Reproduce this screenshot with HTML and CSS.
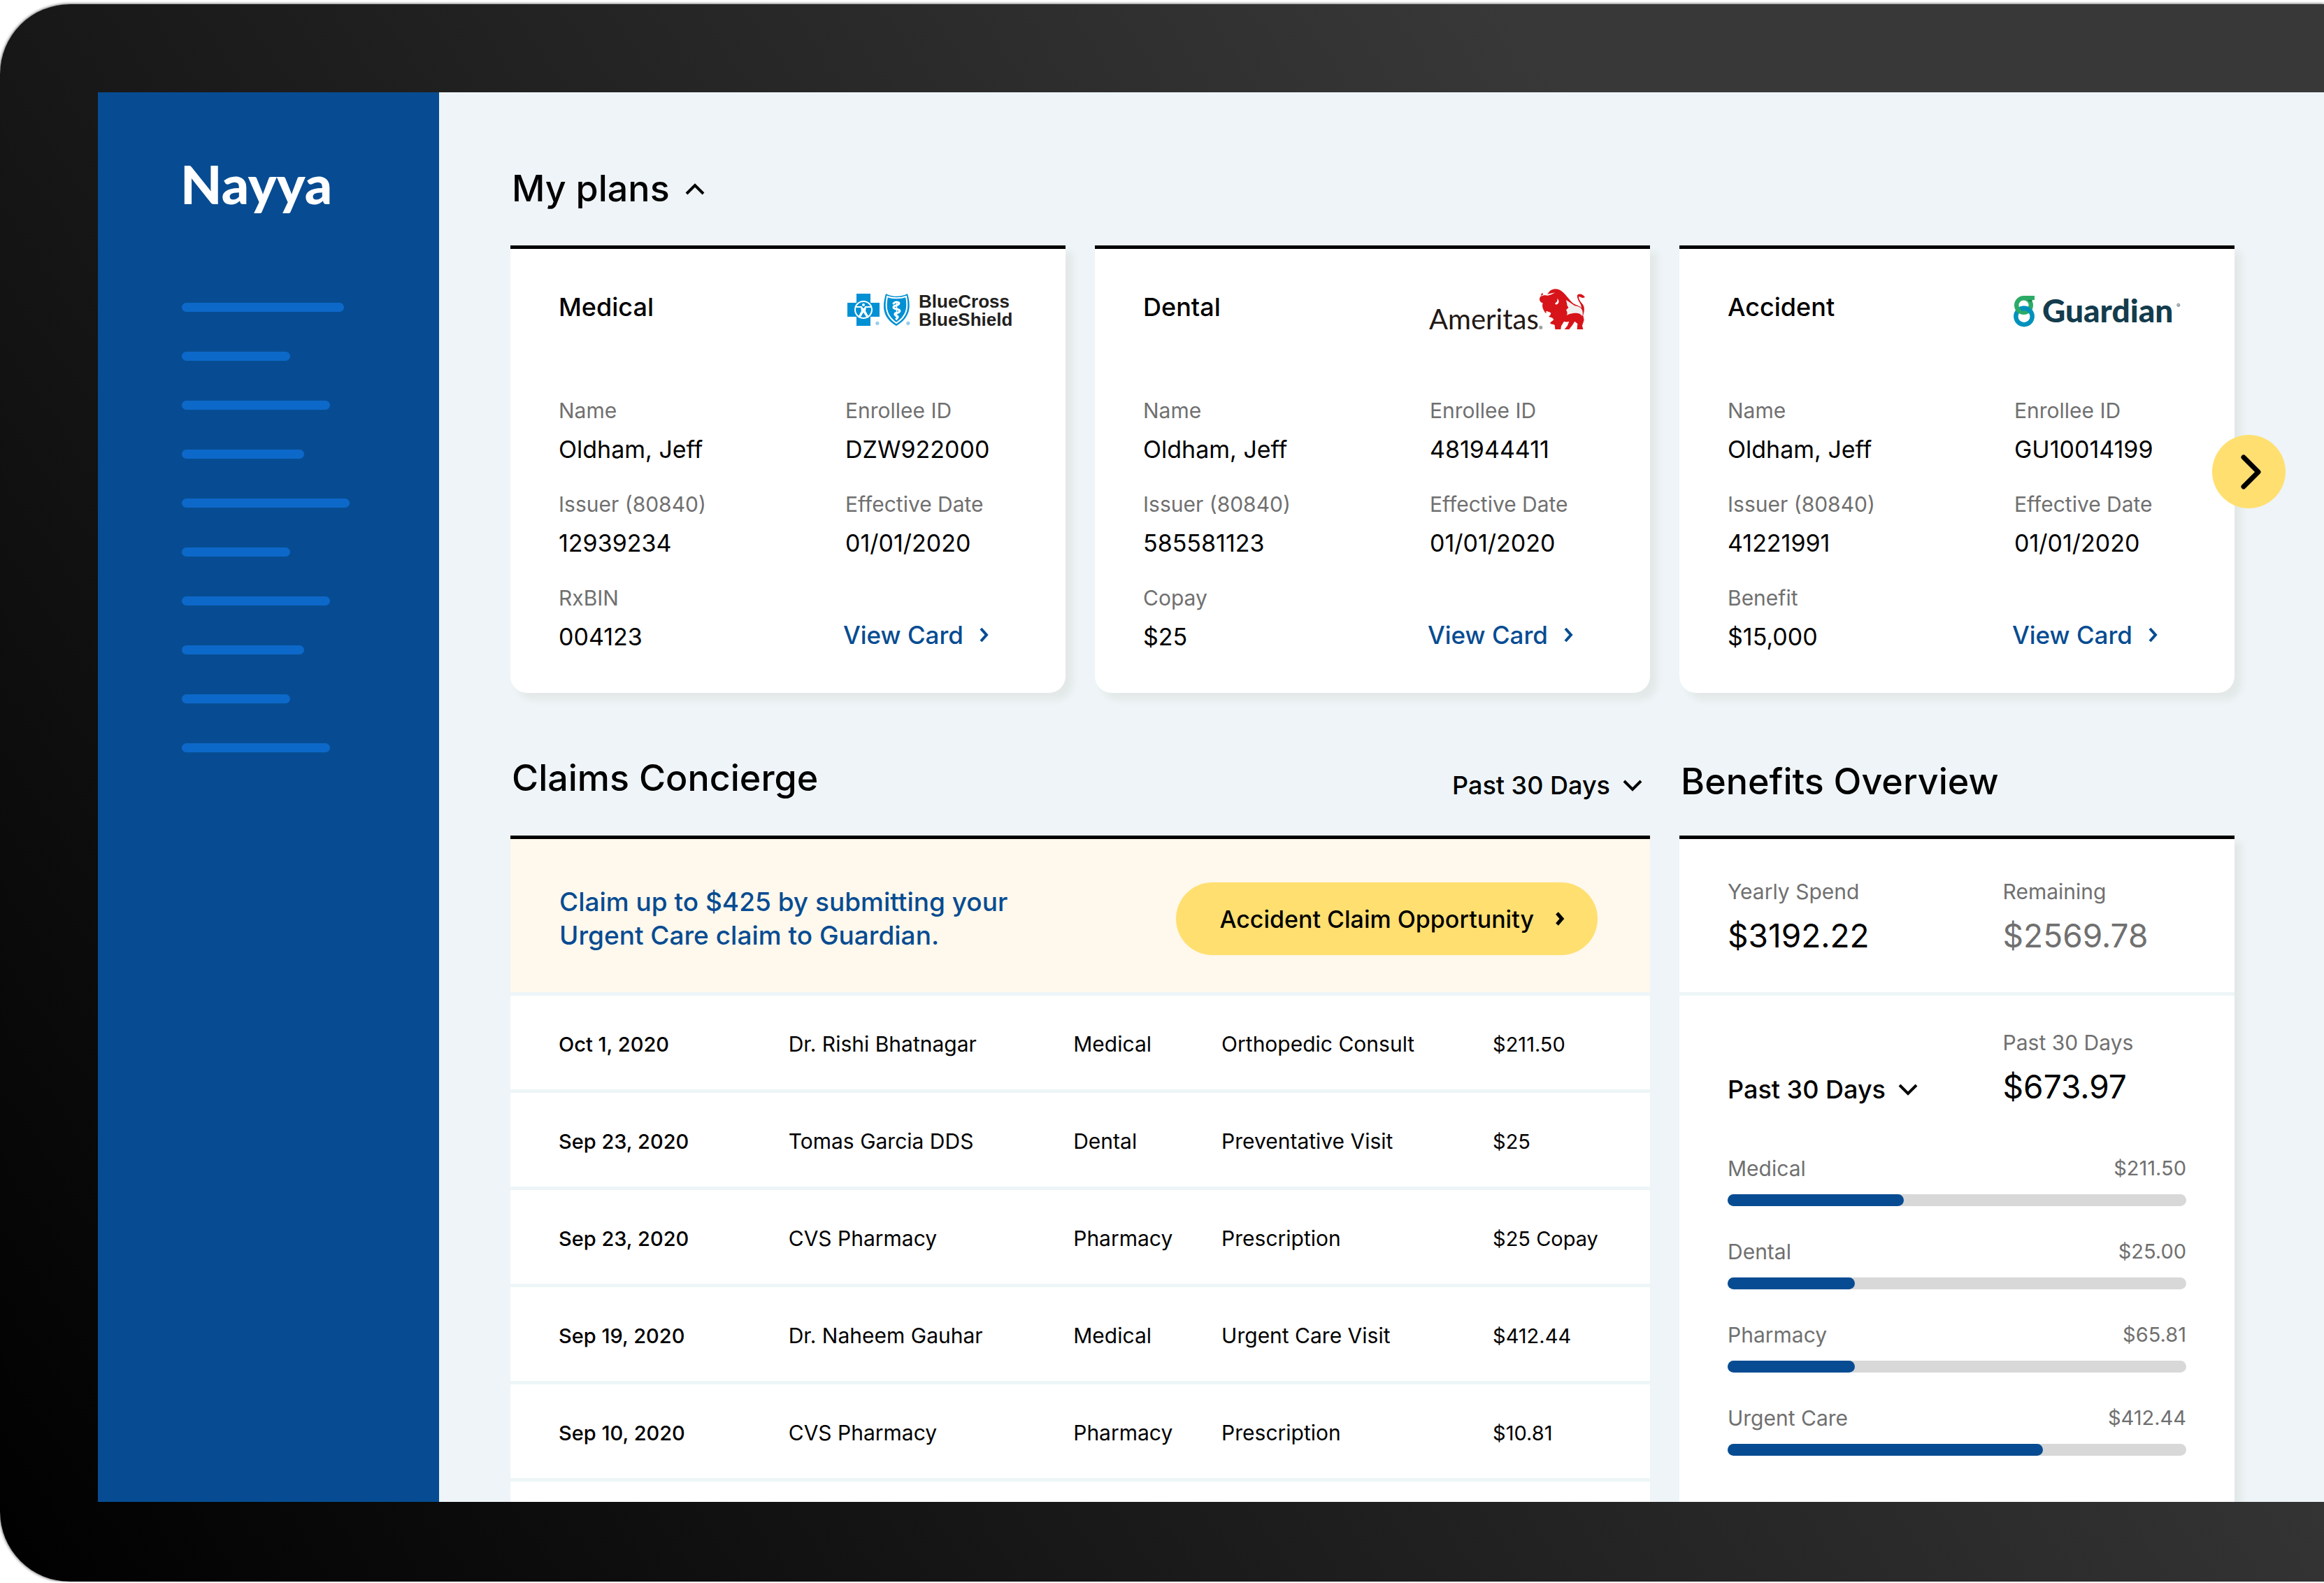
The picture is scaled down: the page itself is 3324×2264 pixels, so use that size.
FILE: index.html
```html
<!DOCTYPE html>
<html lang="en">
<head>
<meta charset="utf-8">
<meta name="viewport" content="width=device-width, initial-scale=1">
<title>Nayya</title>
<link rel="stylesheet" href="styles.css">
</head>
<body>
<div class="device">
  <div class="screen">
    <aside class="sidebar">
      <a class="brand" href="#">Nayya</a>
      <ul class="nav" aria-hidden="true">
        <li style="width:232px"></li>
        <li style="width:155px"></li>
        <li style="width:212px"></li>
        <li style="width:175px"></li>
        <li style="width:240px"></li>
        <li style="width:155px"></li>
        <li style="width:212px"></li>
        <li style="width:175px"></li>
        <li style="width:155px"></li>
        <li style="width:212px"></li>
      </ul>
    </aside>

    <main class="main">
      <section class="plans">
        <h2 class="heading">
          <button class="toggle" type="button" aria-expanded="true">My plans
            <svg class="chevron" width="28" height="17" viewBox="0 0 28 17" aria-hidden="true"><path d="M2 15 14 3 26 15"/></svg>
          </button>
        </h2>
        <div class="plan-list">
          <article class="card">
            <header class="card-head">
              <h3 class="card-title">Medical</h3>
              <svg class="logo" width="248" height="72" viewBox="0 0 248 72" role="img" aria-label="BlueCross BlueShield">
                <path fill="#0090d4" d="M16 15h20v13h13v20H36v13H16V48H3V28h13z"/>
                <circle cx="26" cy="38" r="12" fill="#0090d4" stroke="#fff" stroke-width="2"/>
                <path fill="none" stroke="#fff" stroke-width="2" d="M15 34h8l3 4 3-4h8M26 38v3M23 34l1 6-5 9M29 34l-1 6 5 9M21 48l5-8 5 8"/>
                <circle cx="26" cy="31" r="2" fill="#fff"/>
                <path fill="#0090d4" d="M58 15c9 5 22 5 31 0 5 17 5 34-16 46C52 49 53 32 58 15z"/>
                <path fill="none" stroke="#fff" stroke-width="2" d="M60 19c8 3 19 3 27 0 3 15 2 28-14 38C58 47 57 34 60 19z"/>
                <path fill="none" stroke="#fff" stroke-width="3" stroke-linecap="round" d="M69 29c3-3 8-2 8 0-1 4-9 2-8 6 1 3 9 1 9 5-1 4-8 1-7 5 1 3 5 1 4 4l-2 2"/>
                <path stroke="#fff" stroke-width="1.5" d="M73.500 26v27"/>
                <text class="reg" x="43" y="61" fill="#0090d4">®</text>
                <text class="reg" x="87" y="61" fill="#0090d4">®</text>
                <text class="bcbs" x="105" y="35">BlueCross</text>
                <text class="bcbs" x="105" y="61">BlueShield</text>
              </svg>
            </header>
            <dl class="facts">
              <div><dt>Name</dt><dd>Oldham, Jeff</dd></div>
              <div><dt>Enrollee ID</dt><dd>DZW922000</dd></div>
              <div><dt>Issuer (80840)</dt><dd>12939234</dd></div>
              <div><dt>Effective Date</dt><dd>01/01/2020</dd></div>
              <div><dt>RxBIN</dt><dd>004123</dd></div>
            </dl>
            <a class="view" href="#">View Card
              <svg width="14" height="22" viewBox="0 0 14 22" aria-hidden="true"><path d="M2 2 10 11 2 20"/></svg>
            </a>
          </article>

          <article class="card">
            <header class="card-head">
              <h3 class="card-title">Dental</h3>
              <svg class="logo" width="248" height="72" viewBox="0 0 248 72" role="img" aria-label="Ameritas">
                <text class="ameritas" x="-1" y="66">Ameritas</text>
                <text class="reg" x="156" y="67" fill="#231815">®</text>
                <g transform="translate(145 0) scale(.3333)">
                  <path fill="#f1f0ef" d="M148 74 186 92l28 8 8 24-2 24-30-8-45 6-8-26 14-20z"/>
                  <path fill="#d7141a" d="M51 50C42 51 33 64 37 74c2 7 8 10 13 11-4 12-1 24 6 34 3 10 9 10 12 6 6-2 12-1 17 3-1 8-6 12-10 16l10 3c6 0 8 5 12 9-6 8-14 9-16 16 5 6 13 3 20 8l2 18h24l2-14 12-20c8 4 16 2 22 0l-8 20-12 14h20l14-18 10-16 12 10-2 24h26l-4-16 8-24-4-20c6-16 8-38-4-50-10-12-16-22-14-30 4-2 14 10 26 2-8-12-20-16-30-12-10 8 4 30 12 44l3 14c-10-10-24-12-36-20-18-14-32-40-50-52-14-12-38-14-52 2-5 5-6 10-10 12 12-4 24-4 34-8-10 8-22 12-34 13-9-3-18-1-25 3-2-6 1-13 6-15zM150 72l36 24c12 4 26 4 32 18 4 8 4 18 2 28-10-16-28-15-40-13-10 1-20 4-28 10 6-8 2-18-2-24l10-10c-2-6-8-10-6-15z"/>
                  <path fill="#fff" d="M112 66c8 6 10 18 0 24-6 4-12 0-8-5 6-4 10-8 8-19zM62 122c6-3 12 0 16 3-4 0-6 5-9 4z"/>
                </g>
              </svg>
            </header>
            <dl class="facts">
              <div><dt>Name</dt><dd>Oldham, Jeff</dd></div>
              <div><dt>Enrollee ID</dt><dd>481944411</dd></div>
              <div><dt>Issuer (80840)</dt><dd>585581123</dd></div>
              <div><dt>Effective Date</dt><dd>01/01/2020</dd></div>
              <div><dt>Copay</dt><dd>$25</dd></div>
            </dl>
            <a class="view" href="#">View Card
              <svg width="14" height="22" viewBox="0 0 14 22" aria-hidden="true"><path d="M2 2 10 11 2 20"/></svg>
            </a>
          </article>

          <article class="card">
            <header class="card-head">
              <h3 class="card-title">Accident</h3>
              <svg class="logo" width="248" height="72" viewBox="0 0 248 72" role="img" aria-label="Guardian">
                <circle cx="14" cy="47.500" r="11.700" fill="none" stroke="#0092bc" stroke-width="6.400"/>
                <circle cx="13.500" cy="31.500" r="10.300" fill="none" stroke="#2cab66" stroke-width="6.400"/>
                <path fill="#2cab66" d="M13 18h16v6H13z"/>
                <path fill="#1d7f4f" d="M18 24h8l-2 3z"/>
                <path fill="none" stroke="#0092bc" stroke-width="6.400" d="M9 37a11.700 11.700 0 0 1 15 5"/>
                <text class="guardian" x="40" y="56">Guardian</text>
                <text class="reg" x="232" y="35" fill="#133c4d">®</text>
              </svg>
            </header>
            <dl class="facts">
              <div><dt>Name</dt><dd>Oldham, Jeff</dd></div>
              <div><dt>Enrollee ID</dt><dd>GU10014199</dd></div>
              <div><dt>Issuer (80840)</dt><dd>41221991</dd></div>
              <div><dt>Effective Date</dt><dd>01/01/2020</dd></div>
              <div><dt>Benefit</dt><dd>$15,000</dd></div>
            </dl>
            <a class="view" href="#">View Card
              <svg width="14" height="22" viewBox="0 0 14 22" aria-hidden="true"><path d="M2 2 10 11 2 20"/></svg>
            </a>
          </article>

          <button class="next" type="button" aria-label="Next plans">
            <svg width="36" height="56" viewBox="0 0 36 56" aria-hidden="true"><path d="M10 7 31 28 10 49"/></svg>
          </button>
        </div>
      </section>

      <div class="lower">
        <section class="claims">
          <header class="section-head">
            <h2 class="heading">Claims Concierge</h2>
            <span class="select">
              <select aria-label="Claims period"><option>Past 30 Days</option></select>
              <svg class="chevron" width="28" height="17" viewBox="0 0 28 17" aria-hidden="true"><path d="M2 2 14 14 26 2"/></svg>
            </span>
          </header>
          <div class="panel">
            <div class="banner">
              <p class="banner-text">Claim up to $425 by submitting your<br>Urgent Care claim to Guardian.</p>
              <button class="cta" type="button">Accident Claim Opportunity
                <svg width="14" height="20" viewBox="0 0 14 20" aria-hidden="true"><path d="M3 2 10 10 3 18"/></svg>
              </button>
            </div>
            <table class="claims-table">
              <colgroup><col class="c-date"><col class="c-provider"><col class="c-plan"><col class="c-service"><col></colgroup>
              <tbody>
                <tr><th scope="row">Oct 1, 2020</th><td>Dr. Rishi Bhatnagar</td><td>Medical</td><td>Orthopedic Consult</td><td class="amount">$211.50</td></tr>
                <tr><th scope="row">Sep 23, 2020</th><td>Tomas Garcia DDS</td><td>Dental</td><td>Preventative Visit</td><td class="amount">$25</td></tr>
                <tr><th scope="row">Sep 23, 2020</th><td>CVS Pharmacy</td><td>Pharmacy</td><td>Prescription</td><td class="amount">$25 Copay</td></tr>
                <tr><th scope="row">Sep 19, 2020</th><td>Dr. Naheem Gauhar</td><td>Medical</td><td>Urgent Care Visit</td><td class="amount">$412.44</td></tr>
                <tr><th scope="row">Sep 10, 2020</th><td>CVS Pharmacy</td><td>Pharmacy</td><td>Prescription</td><td class="amount">$10.81</td></tr>
              </tbody>
            </table>
          </div>
        </section>

        <section class="benefits">
          <header class="section-head">
            <h2 class="heading">Benefits Overview</h2>
          </header>
          <div class="panel">
            <div class="totals">
              <dl class="figure"><dt>Yearly Spend</dt><dd>$3192.22</dd></dl>
              <dl class="figure muted"><dt>Remaining</dt><dd>$2569.78</dd></dl>
            </div>
            <div class="period">
              <span class="select">
                <select aria-label="Benefits period"><option>Past 30 Days</option></select>
                <svg class="chevron" width="28" height="17" viewBox="0 0 28 17" aria-hidden="true"><path d="M2 2 14 14 26 2"/></svg>
              </span>
              <dl class="figure"><dt>Past 30 Days</dt><dd>$673.97</dd></dl>
            </div>
            <ul class="spend">
              <li><span>Medical</span><span class="amount">$211.50</span><div class="bar"><div style="width:38.4%"></div></div></li>
              <li><span>Dental</span><span class="amount">$25.00</span><div class="bar"><div style="width:27.7%"></div></div></li>
              <li><span>Pharmacy</span><span class="amount">$65.81</span><div class="bar"><div style="width:27.7%"></div></div></li>
              <li><span>Urgent Care</span><span class="amount">$412.44</span><div class="bar"><div style="width:68.8%"></div></div></li>
            </ul>
          </div>
        </section>
      </div>
    </main>
  </div>
</div>
</body>
</html>
```
FILE: styles.css
```css
* {
  box-sizing: border-box;
}

:root {
  --blue: #074c92;
  --yellow: #ffdf70;
  --page: #eef4f7;
  --rule: #edf5f7;
  --grey: #707070;
}

body,
h2,
h3,
p,
ul,
dl,
dd {
  margin: 0;
  padding: 0;
}

body {
  background: #fff;
  color: #000;
  font-family: Inter, "Liberation Sans", sans-serif;
  font-size: 30px;
}

ul {
  list-style: none;
}

a {
  text-decoration: none;
}

button,
select {
  border: 0;
  padding: 0;
  background: none;
  color: inherit;
  font: inherit;
  cursor: pointer;
}

/* Tablet frame */
.device {
  display: flex;
  height: calc(100vh - 8px);
  margin-top: 6px;
  padding: 126px 0 114px 140px;
  border-radius: 100px 0 0 100px;
  background: linear-gradient(56deg, #000, #383838 76%);
  box-shadow: 0 0 4px #333;
}

.screen {
  display: flex;
  flex: 1;
  min-width: 0;
  overflow: hidden;
  background: var(--page);
}

/* Sidebar */
.sidebar {
  flex: none;
  width: 488px;
  padding: 85px 118px;
  background: var(--blue);
}

.brand {
  display: block;
  height: 90px;
  margin-bottom: 126px;
  color: #fff;
  font: 900 77px/90px Lato, sans-serif;
}

.nav {
  display: grid;
  gap: 57px;
  padding-left: 2px;
}

.nav li {
  height: 13px;
  border-radius: 7px;
  background: #0d69c9;
}

/* Main column */
.main {
  display: flex;
  flex: 1;
  flex-direction: column;
  min-width: 0;
  padding: 106px 128px 0 102px;
}

.heading {
  padding-left: 2px;
  font-size: 52px;
  font-weight: 500;
  line-height: 64px;
}

.toggle {
  display: flex;
  align-items: center;
  gap: 22px;
}

.chevron,
.view svg,
.cta svg,
.next svg {
  fill: none;
  stroke: currentColor;
  stroke-width: 4px;
}

/* Plan cards */
.plan-list {
  position: relative;
  display: grid;
  grid-template-columns: repeat(3, minmax(0, 1fr));
  gap: 42px;
  margin-top: 49px;
}

.card {
  position: relative;
  padding: 49px 69px;
  border-top: 5px solid #000;
  border-radius: 0 0 24px 24px;
  background: #fff;
  box-shadow: 10px 10px 8px #e3e9e8;
}

.card-head,
.facts {
  display: grid;
  grid-template-columns: minmax(0, 5fr) minmax(0, 3fr);
}

.card-head {
  height: 157px;
  align-items: start;
}

.card-title {
  margin-top: 9px;
  font-size: 36px;
  font-weight: 500;
  line-height: 50px;
}

.logo {
  overflow: visible;
}

.reg {
  font-size: 8px;
}

.bcbs {
  fill: #231f20;
  font: 700 26px "Liberation Sans", sans-serif;
}

.ameritas {
  fill: #231815;
  font: 400 40px Lato, sans-serif;
}

.guardian {
  fill: #133c4d;
  font: 900 46px Lato, sans-serif;
}

.facts {
  row-gap: 22px;
}

dt {
  color: var(--grey);
  line-height: 50px;
}

.facts dd {
  font-size: 34px;
  line-height: 62px;
}

.view {
  position: absolute;
  right: 109px;
  bottom: 49px;
  display: flex;
  align-items: center;
  gap: 23px;
  color: var(--blue);
  font-size: 35px;
  font-weight: 500;
  line-height: 68px;
}

.next {
  position: absolute;
  top: 271px;
  right: -73px;
  display: grid;
  place-items: center;
  width: 105px;
  height: 105px;
  border-radius: 50%;
  background: var(--yellow);
}

.next svg {
  stroke-width: 7px;
  stroke-linecap: round;
  stroke-linejoin: round;
}

/* Claims and benefits */
.lower {
  display: grid;
  flex: 1;
  grid-template-columns: repeat(3, minmax(0, 1fr));
  gap: 42px;
  margin-top: 90px;
}

.claims,
.benefits {
  display: flex;
  flex-direction: column;
}

.claims {
  grid-column: span 2;
}

.section-head {
  display: flex;
  align-items: flex-end;
  justify-content: space-between;
  height: 114px;
  padding: 0 11px 50px 0;
}

.benefits .section-head {
  padding-bottom: 45px;
}

.panel {
  flex: 1;
  border-top: 5px solid #000;
  background: #fff;
}

.benefits .panel {
  box-shadow: 10px 10px 8px #e3e9e8;
}

.select {
  display: inline-grid;
  align-items: center;
  justify-self: start;
}

.select select,
.select svg {
  grid-area: 1 / 1;
}

.select select {
  appearance: none;
  padding-right: 46px;
  font-size: 36px;
  font-weight: 500;
  line-height: 44px;
}

.select svg {
  justify-self: end;
  pointer-events: none;
}

.banner {
  display: flex;
  align-items: flex-start;
  justify-content: space-between;
  height: 224px;
  padding: 62px 75px 0 70px;
  border-bottom: 5px solid var(--rule);
  background: #fff8ec;
}

.banner-text {
  padding-top: 4px;
  color: var(--blue);
  font-size: 37px;
  font-weight: 500;
  line-height: 48px;
}

.cta {
  display: flex;
  align-items: center;
  gap: 30px;
  height: 104px;
  padding: 0 47px 0 62px;
  border-radius: 52px;
  background: var(--yellow);
  font-size: 34px;
  font-weight: 500;
}

.cta svg {
  stroke-width: 5px;
}

.claims-table {
  width: 100%;
  border-collapse: separate;
  border-spacing: 0;
  table-layout: fixed;
}

.c-date {
  width: 24.4%;
}

.c-provider {
  width: 25%;
}

.c-plan {
  width: 13%;
}

.c-service {
  width: 23.8%;
}

.claims-table th,
.claims-table td {
  height: 139px;
  padding: 4px 0 0;
  border-bottom: 5px solid var(--rule);
  font-weight: 400;
  text-align: left;
}

.claims-table th {
  padding-left: 69px;
  font-size: 29px;
  font-weight: 500;
}

.claims-table .amount,
.spend .amount {
  font-size: 29px;
}

.totals,
.period {
  display: grid;
  grid-template-columns: minmax(0, 3fr) minmax(0, 2fr);
  padding: 50px 69px 43px;
}

.totals {
  border-bottom: 5px solid var(--rule);
}

.period {
  align-items: end;
  padding: 42px 69px 54px;
}

.period .select {
  margin-bottom: 12px;
}

.figure dd {
  font-size: 46px;
  line-height: 76px;
}

.muted dd {
  color: var(--grey);
}

.spend {
  display: grid;
  gap: 40px;
  padding: 0 69px;
}

.spend li {
  display: grid;
  grid-template-columns: 1fr auto;
  color: var(--grey);
  line-height: 50px;
}

.bar {
  grid-column: 1 / -1;
  height: 17px;
  margin-top: 12px;
  border-radius: 9px;
  background: #d8d8d8;
}

.bar div {
  height: 100%;
  border-radius: 9px;
  background: var(--blue);
}
```
